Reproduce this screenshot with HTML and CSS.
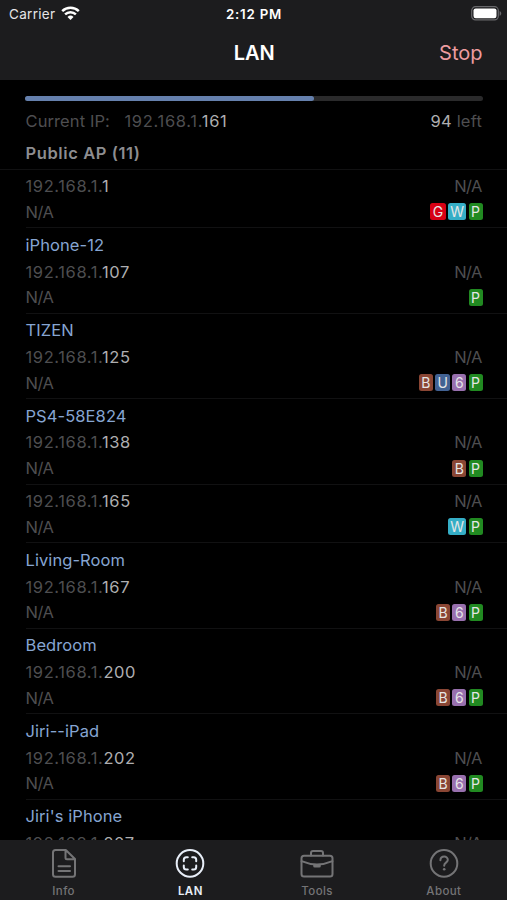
FILE: index.html
```html
<!DOCTYPE html>
<html lang="en">
<head>
<meta charset="utf-8">
<title>LAN</title>
<link rel="stylesheet" href="styles.css">
</head>
<body>
<div class="screen">
  <header class="top">
    <div class="status">
      <div class="carrier"><span>Carrier</span>
        <svg width="19" height="14" viewBox="0 0 19 14" fill="none" stroke="#fff" stroke-width="2.5"><path d="M1.2 5.2a12 12 0 0 1 16.6 0M4.1 8.4a7.8 7.8 0 0 1 10.8 0"/><path d="M6.5 10.9a4.4 4.4 0 0 1 6 0l-3 3z" fill="#fff" stroke="none"/></svg>
      </div>
      <div class="clock">2:12 PM</div>
      <svg class="battery" width="31" height="15" viewBox="0 0 31 15"><rect x=".7" y=".7" width="26.6" height="13.2" rx="3.8" fill="none" stroke="#68686b" stroke-width="1.2"/><rect x="2.5" y="2.4" width="23" height="9.8" rx="2.2" fill="#fff"/><path d="M28.6 5v4.8c2.2-.8 2.2-4 0-4.8z" fill="#68686b"/></svg>
    </div>
    <div class="nav"><h1>LAN</h1><span class="stop">Stop</span></div>
  </header>
  <main class="content">
    <div class="track"><div class="bar"></div></div>
    <div class="line current"><span class="label">Current IP:<span class="addr ip">192.168.1.<b>161</b></span></span><span class="left"><b>94</b> left</span></div>
    <h2>Public AP (11)</h2>
    <ul class="hosts">
      <li><div class="line"><span class="addr">192.168.1.<b>1</b></span><span>N/A</span></div><div class="line"><span>N/A</span><span class="tags"><i class="g">G</i><i class="w">W</i><i class="p">P</i></span></div></li>
      <li><h3>iPhone-12</h3><div class="line"><span class="addr">192.168.1.<b>107</b></span><span>N/A</span></div><div class="line"><span>N/A</span><span class="tags"><i class="p">P</i></span></div></li>
      <li><h3>TIZEN</h3><div class="line"><span class="addr">192.168.1.<b>125</b></span><span>N/A</span></div><div class="line"><span>N/A</span><span class="tags"><i class="b">B</i><i class="u">U</i><i class="six">6</i><i class="p">P</i></span></div></li>
      <li><h3>PS4-58E824</h3><div class="line"><span class="addr">192.168.1.<b>138</b></span><span>N/A</span></div><div class="line"><span>N/A</span><span class="tags"><i class="b">B</i><i class="p">P</i></span></div></li>
      <li><div class="line"><span class="addr">192.168.1.<b>165</b></span><span>N/A</span></div><div class="line"><span>N/A</span><span class="tags"><i class="w">W</i><i class="p">P</i></span></div></li>
      <li><h3>Living-Room</h3><div class="line"><span class="addr">192.168.1.<b>167</b></span><span>N/A</span></div><div class="line"><span>N/A</span><span class="tags"><i class="b">B</i><i class="six">6</i><i class="p">P</i></span></div></li>
      <li><h3>Bedroom</h3><div class="line"><span class="addr">192.168.1.<b>200</b></span><span>N/A</span></div><div class="line"><span>N/A</span><span class="tags"><i class="b">B</i><i class="six">6</i><i class="p">P</i></span></div></li>
      <li><h3>Jiri--iPad</h3><div class="line"><span class="addr">192.168.1.<b>202</b></span><span>N/A</span></div><div class="line"><span>N/A</span><span class="tags"><i class="b">B</i><i class="six">6</i><i class="p">P</i></span></div></li>
      <li><h3>Jiri's iPhone</h3><div class="line"><span class="addr">192.168.1.<b>207</b></span><span>N/A</span></div></li>
    </ul>
  </main>
  <nav class="tabs">
    <div class="tab"><svg width="34" height="32" viewBox="0 0 34 32"><path d="M8.500 2h10.300L28 11v15.200a2.500 2.500 0 0 1-2.500 2.500h-17A2.500 2.500 0 0 1 6 26.200V4.500A2.500 2.500 0 0 1 8.500 2M18.500 2.500v7.200a1.500 1.500 0 0 0 1.500 1.500h7.500M11.500 18.300h11.500M11.500 23h11.500"/></svg><span>Info</span></div>
    <div class="tab on"><svg width="34" height="32" viewBox="0 0 34 32"><circle cx="17" cy="15.400" r="13.300"/><path d="M10.800 13.200v-1.500a2.500 2.500 0 0 1 2.500-2.500h1.500M19.200 9.200h1.500a2.500 2.500 0 0 1 2.500 2.500v1.500M23.200 17.600v1.500a2.500 2.500 0 0 1-2.500 2.500h-1.500M14.800 21.600h-1.500a2.500 2.500 0 0 1-2.500-2.500v-1.500"/></svg><span>LAN</span></div>
    <div class="tab"><svg width="34" height="32" viewBox="0 0 34 32"><rect x="1.500" y="7.700" width="31" height="20.800" rx="2.500"/><path d="M11 7.500V5a2 2 0 0 1 2-2h8a2 2 0 0 1 2 2v2.500M1.500 13.200Q17 19.800 32.500 13.200"/><path class="solid" d="M13.200 16.500h7.600v1.500a1.500 1.500 0 0 1-1.500 1.500h-4.600a1.500 1.500 0 0 1-1.500-1.500z"/></svg><span>Tools</span></div>
    <div class="tab"><svg width="34" height="32" viewBox="0 0 34 32"><circle cx="17" cy="15.400" r="13.300"/><path d="M13.400 12.200c.2-5 7.600-4.700 7.400-.3-.1 2.700-3.600 2.800-3.600 5.500v.4"/><circle class="solid" cx="17.200" cy="21.300" r="1.300"/></svg><span>About</span></div>
  </nav>
</div>
</body>
</html>
```
FILE: styles.css
```css
* { box-sizing: border-box; }
body { margin: 0; background: #000; font-family: Inter, "Liberation Sans", sans-serif; color: #4e4e50; }
h1, h2, h3, ul { margin: 0; padding: 0; }
b, i { font-style: normal; font-weight: 400; }
.screen { width: 507px; height: 900px; display: flex; flex-direction: column; overflow: hidden; }
.top { flex: none; height: 80px; background: #1c1c1e; color: #fff; }
.status { height: 28px; padding: 0 6px 0 9px; display: grid; grid-template-columns: 1fr auto 1fr; align-items: center; font-size: 13.5px; }
.carrier { display: flex; align-items: center; gap: 6px; color: #e5e5e7; letter-spacing: .3px; }
.carrier svg { margin-top: -2px; }
.clock { font-weight: 600; font-size: 13.3px; letter-spacing: .8px; padding-right: 2px; }
.battery { justify-self: end; margin-right: -1px; margin-top: -1px; }
.nav { height: 50px; padding: 0 24.5px 0 26px; display: grid; grid-template-columns: 1fr auto 1fr; align-items: center; }
.nav h1 { grid-column: 2; font-size: 20px; font-weight: 600; }
.stop { justify-self: end; font-size: 20px; color: #ee9ca0; }
.content { flex: 1; min-height: 0; overflow: hidden; padding-top: 16px; }
.track { height: 5px; margin: 0 24.5px 0 25px; border-radius: 3px; background: #2a2a2b; }
.bar { width: 63.1%; height: 5px; border-radius: 3px; background: #6580ad; }
.line { height: 25.7px; display: flex; justify-content: space-between; align-items: center; padding-right: 25px; font-size: 16.5px; letter-spacing: -.5px; }
.line b { color: #aeaeb0; }
.addr, .line .addr b { letter-spacing: .68px; }
.hosts .addr, .hosts .line .addr b { letter-spacing: .6px; }
.current { margin: 7px 0 0 25.5px; }
.label { letter-spacing: .1px; }
.left { letter-spacing: .2px; }
.ip { margin-left: 14.5px; }
h2 { height: 36px; padding-left: 25.5px; line-height: 38px; font-size: 16.5px; letter-spacing: .6px; font-weight: 600; color: #8d8d90; border-bottom: 1px solid #111112; }
.hosts { list-style: none; padding-left: 25.5px; }
li { padding: 3.5px 0 2.8px; border-bottom: 1px solid #111112; }
h3 { height: 26.8px; line-height: 26px; font-size: 16.5px; letter-spacing: .08px; font-weight: 400; color: #86a5d2; }
.tags { display: flex; gap: 2.2px; letter-spacing: 0; margin-right: -.5px; }
.tags i { width: 14px; height: 17px; border-radius: 2.5px; font-size: 14px; line-height: 17px; color: #e6e6e6; text-align: center; }
.tags .g { width: 15.5px; background: #d60014; }
.tags .w { width: 18.5px; background: #35aec6; }
.p { background: #218a21; }
.b { background: #8a4634; }
.tags .u { width: 15px; background: #426293; }
.six { background: #9870ae; }
.tabs { flex: none; height: 60px; background: #1c1c1e; display: grid; grid-template-columns: repeat(4, 1fr); color: #747476; }
.tab { display: flex; flex-direction: column; align-items: center; padding: 8px 0 0 .5px; font-size: 11.5px; font-weight: 500; letter-spacing: .4px; }
.tab svg { fill: none; stroke: currentColor; stroke-width: 2; stroke-linecap: round; stroke-linejoin: round; }
.tab span { line-height: 14px; margin-top: 4px; }
.tab .solid { fill: currentColor; stroke: none; }
.on { color: #e8eef8; }
.on span { font-weight: 600; }
```
